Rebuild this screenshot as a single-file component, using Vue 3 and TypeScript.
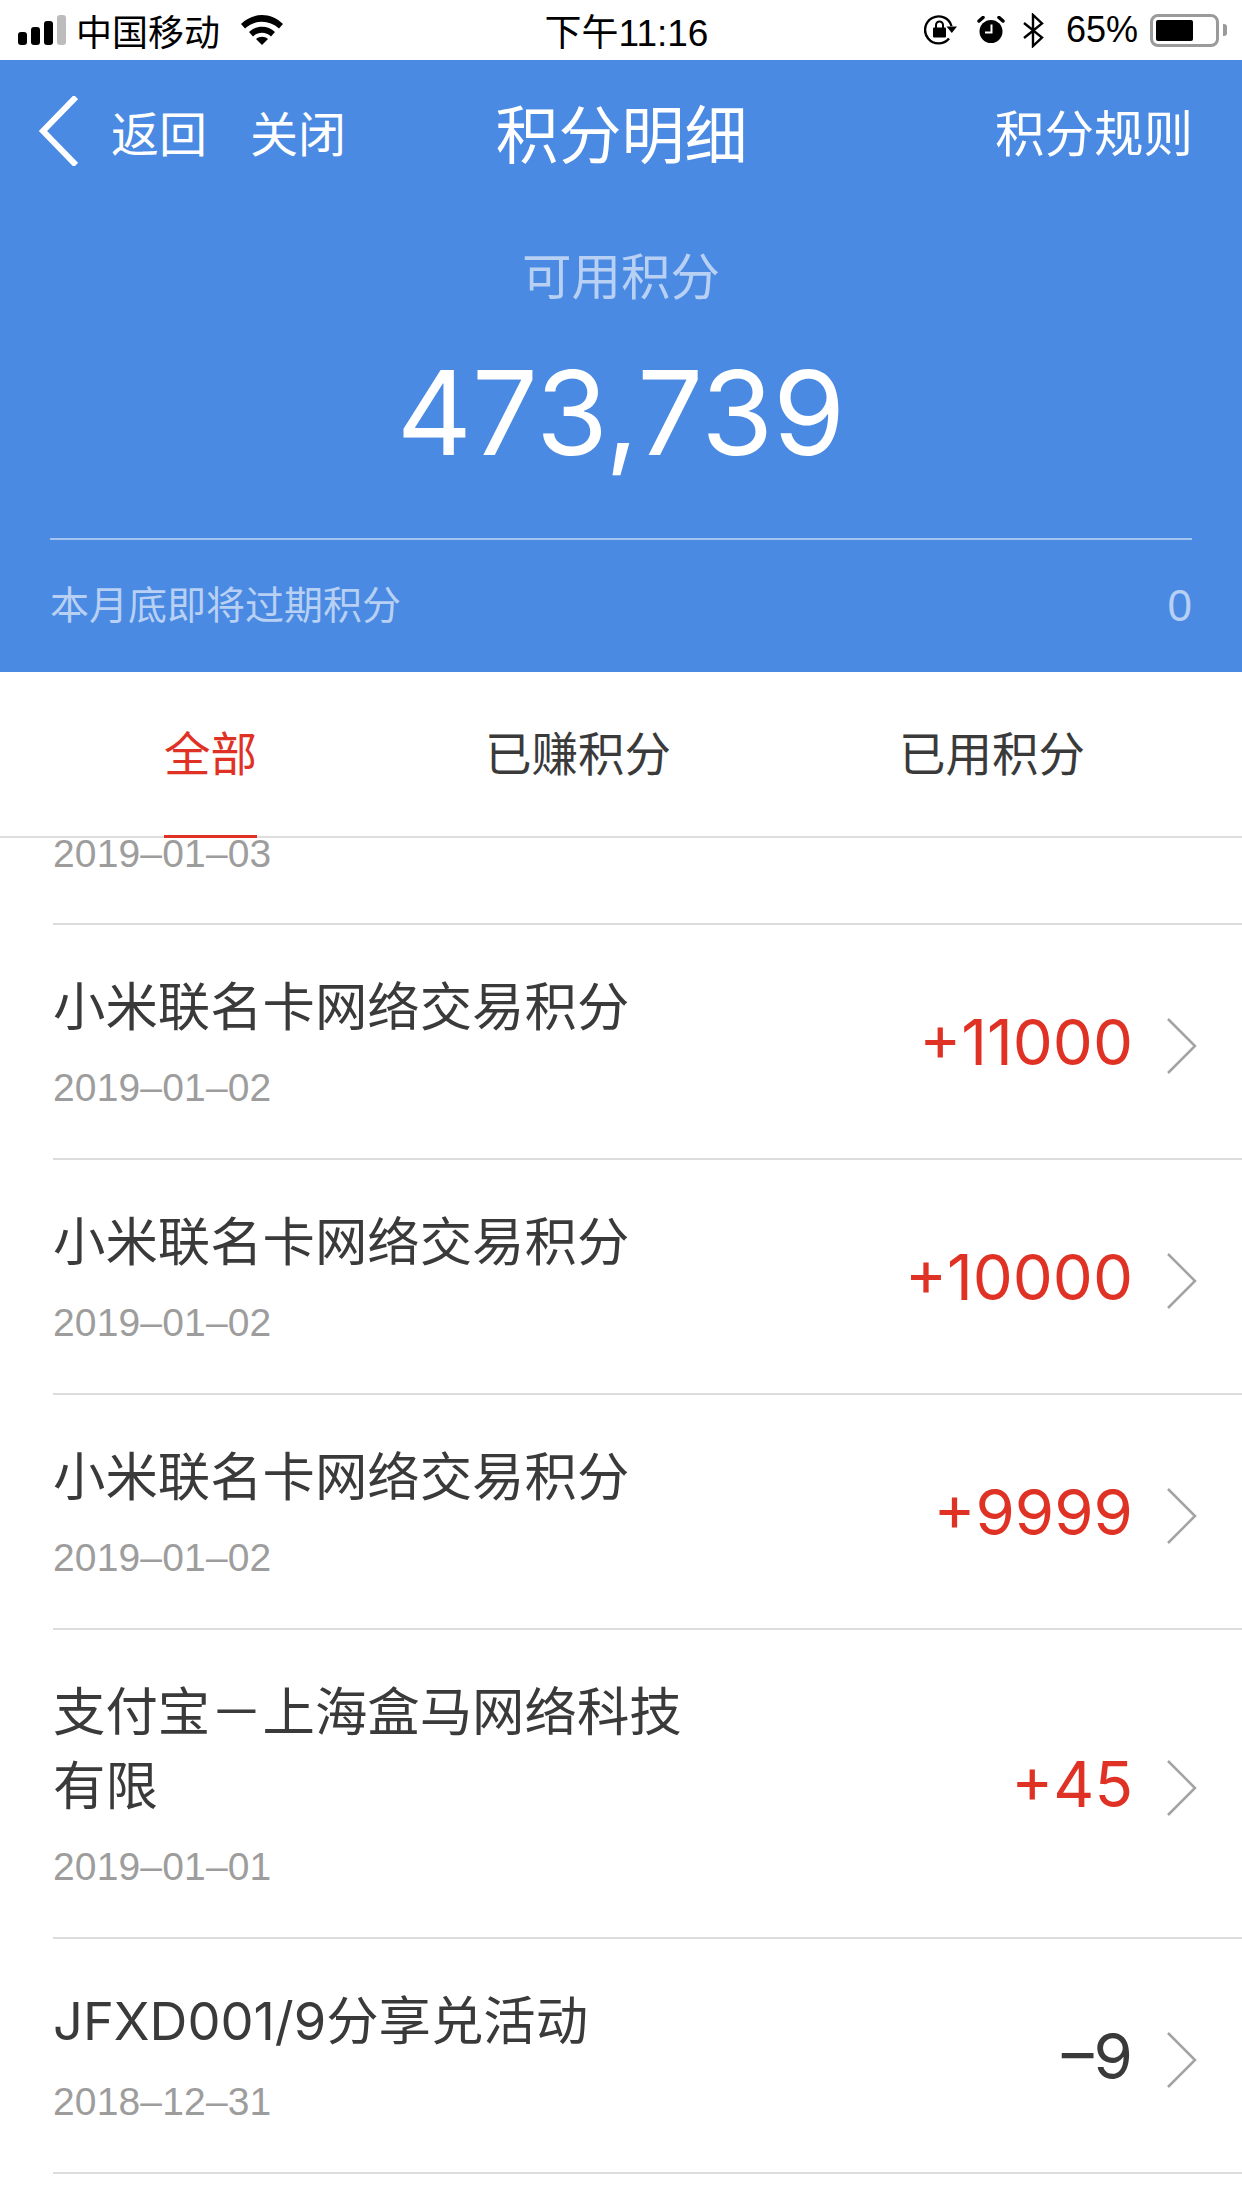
<script setup lang="ts">
interface Row { title: string; date: string; amount: string; plus: boolean }
const rows: Row[] = [
  { title: '小米联名卡网络交易积分', date: '2019–01–02', amount: '+11000', plus: true },
  { title: '小米联名卡网络交易积分', date: '2019–01–02', amount: '+10000', plus: true },
  { title: '小米联名卡网络交易积分', date: '2019–01–02', amount: '+9999', plus: true },
  { title: '支付宝－上海盒马网络科技有限', date: '2019–01–01', amount: '+45', plus: true },
  { title: 'JFXD001/9分享兑活动', date: '2018–12–31', amount: '–9', plus: false },
]
const tabs = ['全部', '已赚积分', '已用积分']
</script>

<template>
  <div class="page">
    <div class="status">
      <div class="st-left">
        <svg width="48" height="30" viewBox="0 0 48 30">
          <rect x="0" y="17" width="9" height="13" rx="3" fill="#000" />
          <rect x="13" y="12" width="9" height="18" rx="3" fill="#000" />
          <rect x="26" y="6" width="9" height="24" rx="3" fill="#000" />
          <rect x="39" y="0" width="9" height="30" rx="3" fill="#bcbcbc" />
        </svg>
        <span class="carrier">中国移动</span>
        <svg class="wifi" width="42" height="30" viewBox="0 0 42 30">
          <path d="M0 9 C12 -3 30 -3 42 9 L38 13.500 C28 4.500 14 4.500 4 13.500 Z" fill="#000" />
          <path d="M8 17 C15 10 27 10 34 17 L30 21.500 C25 16.500 17 16.500 12 21.500 Z" fill="#000" />
          <path d="M15 24 C18.500 21 23.500 21 27 24 L21 30 Z" fill="#000" />
        </svg>
      </div>
      <div class="st-time">下午11:16</div>
      <div class="st-right">
        <svg width="33" height="30" viewBox="0 0 33 30">
          <path d="M25 23.500 A13.500 13.500 0 1 1 27.500 11" fill="none" stroke="#000" stroke-width="2.400" />
          <path d="M22.500 11.500 H33 L27.800 18 Z" fill="#000" />
          <rect x="9" y="12.500" width="13" height="10" rx="1" fill="#000" />
          <path d="M12 13 V10 A3.500 3.500 0 0 1 19 10 V13" fill="none" stroke="#000" stroke-width="2" />
        </svg>
        <svg class="alarm" width="28" height="28" viewBox="0 0 28 28">
          <circle cx="14" cy="15.500" r="11.500" fill="#000" />
          <path d="M14.500 8.500 V16.500 H8" fill="none" stroke="#fff" stroke-width="2" />
          <path d="M2 5 L6 1.500 M26 5 L22 1.500" stroke="#000" stroke-width="3.500" stroke-linecap="round" />
        </svg>
        <svg class="bt" width="21" height="35" viewBox="0 0 21 35">
          <path d="M1 10 L19 24.500 L10 33 V2 L19 10.500 L1 25" fill="none" stroke="#000" stroke-width="2.400" />
        </svg>
        <span class="pct">65%</span>
        <div class="battery"><div class="battery-fill"></div></div>
        <div class="battery-tip"></div>
      </div>
    </div>

    <section class="hero">
      <div class="nav">
        <div class="nav-left">
          <svg width="40" height="70" viewBox="0 0 40 70">
            <path d="M38 1 L5 35 L38 69" fill="none" stroke="#fff" stroke-width="6" />
          </svg>
          <span class="nav-back">返回</span>
          <span class="nav-close">关闭</span>
        </div>
        <div class="nav-title">积分明细</div>
        <div class="nav-rule">积分规则</div>
      </div>
      <div class="avail-label">可用积分</div>
      <div class="avail-num">473,739</div>
      <div class="expire">
        <span>本月底即将过期积分</span>
        <span class="expire-num">0</span>
      </div>
    </section>

    <div class="tabs">
      <div v-for="(t, i) in tabs" :key="t" class="tab" :class="{ active: i === 0 }">{{ t }}</div>
    </div>

    <div class="list">
      <div class="clipped"><span class="date">2019–01–03</span></div>
      <div v-for="(r, i) in rows" :key="i" class="row">
        <div class="row-main">
          <div class="row-title">{{ r.title }}</div>
          <div class="date">{{ r.date }}</div>
        </div>
        <div class="amount" :class="{ plus: r.plus }">{{ r.amount }}</div>
        <svg class="chev" width="32" height="56" viewBox="0 0 32 56">
          <path d="M2 1 L29 28 L2 55" fill="none" stroke="#a3a3a3" stroke-width="2.500" />
        </svg>
      </div>
    </div>
  </div>
</template>

<style scoped>
.page {
  width: 1242px;
  height: 2208px;
  overflow: hidden;
  background: #fff;
  font-family: "Liberation Sans", "Noto Sans CJK SC", sans-serif;
}
.status {
  height: 60px;
  display: grid;
  grid-template-columns: 1fr auto 1fr;
  align-items: center;
  color: #000;
  box-sizing: border-box;
  padding: 0 15px 0 18px;
}
.st-left { display: flex; align-items: center; }
.carrier { font-size: 36px; margin-left: 10px; }
.wifi { margin-left: 21px; }
.st-time { font-size: 37px; text-align: center; margin-left: 8px; }
.st-right { display: flex; align-items: center; justify-content: flex-end; }
.alarm { margin-left: 20px; }
.bt { margin-left: 18px; }
.pct { font-size: 36px; margin-left: 22px; }
.battery {
  width: 69px;
  height: 33px;
  border: 3px solid #9a9a9a;
  border-radius: 8px;
  margin-left: 12px;
  padding: 3px;
  box-sizing: border-box;
}
.battery-fill { width: 37px; height: 21px; background: #000; border-radius: 2px; }
.battery-tip { width: 4px; height: 12px; background: #9a9a9a; margin-left: 4px; border-radius: 0 3px 3px 0; }

.hero {
  height: 612px;
  background: #4a8ae2;
  color: #fff;
  box-sizing: border-box;
  padding: 25px 50px 0;
  display: flex;
  flex-direction: column;
}
.nav {
  height: 74px;
  display: grid;
  grid-template-columns: 1fr auto 1fr;
  align-items: center;
  margin: 0 -1px 0 -12px;
}
.nav-left { display: flex; align-items: center; }
.nav-back { font-size: 48px; margin-left: 33px; }
.nav-close { font-size: 48px; margin-left: 43px; }
.nav-title { font-size: 63px; text-align: center; padding-left: 12px; }
.nav-rule { font-size: 49.5px; text-align: right; }
.avail-label {
  margin-top: 87px;
  font-size: 49.500px;
  line-height: 64px;
  text-align: center;
  color: #b7d0f3;
}
.avail-num {
  margin-top: 31px;
  font-family: Inter, "Liberation Sans", sans-serif;
  font-size: 116.5px;
  line-height: 144px;
  text-align: center;
}
.expire {
  margin-top: 53px;
  border-top: 2px solid #a4c4f0;
  padding-top: 36px;
  display: flex;
  justify-content: space-between;
  font-size: 39px;
  line-height: 60px;
  color: #b7d0f3;
}
.expire-num { font-size: 44px; }

.tabs {
  height: 166px;
  display: flex;
  box-sizing: border-box;
  border-bottom: 2px solid #dedede;
  padding: 0 0 0 164px;
  gap: 228px;
}
.tab {
  height: 166px;
  line-height: 166px;
  font-size: 46.5px;
  color: #3a3a3a;
  box-sizing: border-box;
}
.tab.active {
  color: #e03125;
  border-bottom: 3px solid #e03125;
}
.list { padding-left: 53px; }
.clipped {
  height: 95px;
  border-bottom: 2px solid #dcdcdc;
  box-sizing: border-box;
}
.clipped .date { display: block; margin-top: -8px; }
.date {
  font-size: 39px;
  letter-spacing: 0.15px;
  line-height: 48px;
  color: #9d9d9d;
}
.row {
  display: flex;
  align-items: center;
  border-bottom: 2px solid #dcdcdc;
  box-sizing: border-box;
  padding-right: 44px;
}
.row-main { width: 640px; padding: 45px 0 46px; }
.row-title {
  font-family: Inter, "Liberation Sans", "Noto Sans CJK SC", sans-serif;
  font-size: 52.4px;
  line-height: 74px;
  color: #3a3a3a;
  margin-bottom: 20px;
}
.amount {
  margin-left: auto;
  font-family: Inter, "Liberation Sans", sans-serif;
  font-size: 63.5px;
  color: #3a3a3a;
}
.amount.plus { color: #e03125; }
.chev { margin-left: 33px; margin-top: 8px; }
</style>
